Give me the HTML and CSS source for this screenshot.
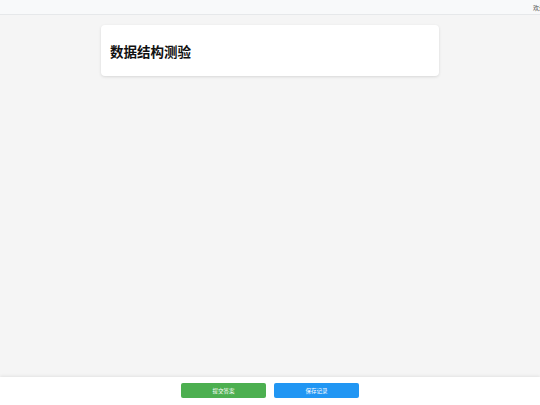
FILE: index.html
```html
<!DOCTYPE html>
<html lang="zh">
<head>
<meta charset="utf-8">
<link rel="stylesheet" href="styles.css">
</head>
<body>
<div class="page">
  <header class="topbar"><span class="welcome">欢迎使用在线测验系统</span></header>
  <main class="main">
    <section class="card">
      <h1 class="title">数据结构测验</h1>
    </section>
  </main>
  <footer class="footer">
    <button class="btn btn-green">提交答案</button>
    <button class="btn btn-blue">保存记录</button>
  </footer>
</div>
</body>
</html>
```
FILE: styles.css
```css
* { box-sizing: border-box; }
html, body { margin: 0; padding: 0; }
body {
  font-family: "Noto Sans CJK SC", "Noto Sans", sans-serif;
  background: #f5f5f5;
  color: #222;
}
.page {
  display: flex;
  flex-direction: column;
  height: 405px;
  overflow: hidden;
}
.topbar {
  height: 15px;
  flex: none;
  background: #f8f9fa;
  border-bottom: 1px solid #e6e8ea;
  display: flex;
  align-items: center;
  padding-left: 533px;
  white-space: nowrap;
  overflow: hidden;
}
.welcome {
  font-size: 6px;
  color: #555;
}
.main {
  flex: 1;
  display: flex;
  flex-direction: column;
  align-items: center;
  padding-top: 10px;
}
.card {
  width: 338px;
  height: 51px;
  background: #fff;
  border-radius: 4px;
  box-shadow: 0 1px 3px rgba(0,0,0,0.12);
  display: flex;
  align-items: center;
  padding: 0 9px;
}
.title {
  margin: 0;
  font-size: 13.5px;
  font-weight: 700;
  color: #111;
}
.footer {
  flex: none;
  height: 28px;
  background: #fff;
  box-shadow: 0 -1px 3px rgba(0,0,0,0.08);
  display: flex;
  justify-content: center;
  align-items: flex-start;
  padding-top: 6px;
  gap: 8px;
}
.btn {
  width: 85px;
  height: 15px;
  border: none;
  border-radius: 2px;
  color: #fff;
  font-family: "Noto Sans CJK SC", sans-serif;
  font-size: 5.5px;
  padding: 0;
}
.btn-green { background: #4caf50; }
.btn-blue { background: #2196f3; }
```
